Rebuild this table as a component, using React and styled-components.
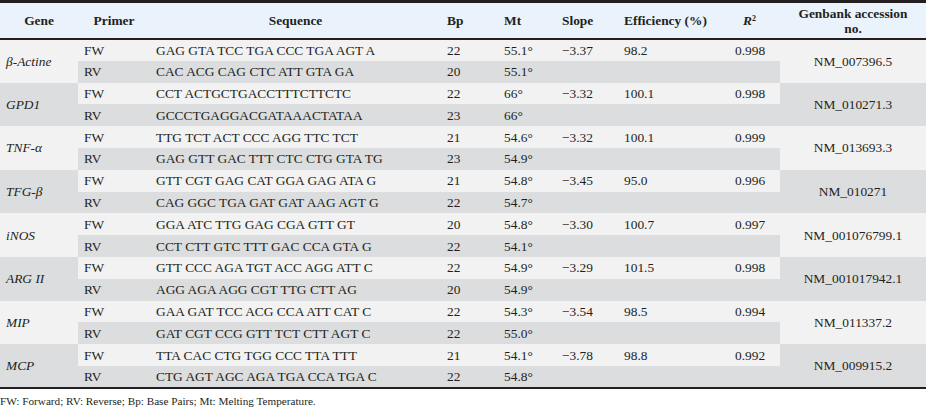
import React from 'react'
import styled, { createGlobalStyle } from 'styled-components'

const GlobalStyle = createGlobalStyle`
    html, body {
        margin: 0;
        padding: 0;
        background: #ffffff;
    }

    body {
        font-family: "Liberation Serif", "Times New Roman", Times, serif;
        color: #231f20;
    }
`

const SERIF = '"Liberation Serif", "Times New Roman", Times, serif'
const LIGHT = '#f2f2f2'
const DARK = '#dcdddf'

const Wrapper = styled.div`
    width: 926px;
    font-family: ${SERIF};
`

const Table = styled.table`
    width: 926px;
    border-collapse: collapse;
    border-spacing: 0;
    table-layout: fixed;
    border-top: 3px solid #231f20;
    border-bottom: 2px solid #231f20;
    font-family: ${SERIF};
    font-size: 13.4px;
    color: #231f20;
`

const HeadRow = styled.tr`
    background: #eaf3fb;
    border-bottom: 2px solid #231f20;
`

const HeadCell = styled.th`
    height: 37.5px;
    box-sizing: border-box;
    font-family: ${SERIF};
    font-weight: 700;
    text-align: ${p => p.$align || 'left'};
    padding: 0 ${p => p.$pad || 6}px;
    vertical-align: middle;
    line-height: 15px;

    i {
        font-style: italic;
    }

    sup {
        font-size: 8px;
        vertical-align: 4px;
        line-height: 0;
    }
`

const Cell = styled.td`
    height: 21.8px;
    box-sizing: border-box;
    background: ${p => (p.$dark ? DARK : LIGHT)};
    padding: 0 6px;
    font-family: ${SERIF};
    line-height: 15px;
    text-align: ${p => p.$align || 'left'};
    vertical-align: middle;
    white-space: nowrap;
    font-style: ${p => (p.$italic ? 'italic' : 'normal')};
`

const Note = styled.p`
    margin: 5px 0 0;
    font-family: ${SERIF};
    font-size: 11.2px;
    line-height: 14px;
`

const genes = [
    {
        name: 'β-Actine', acc: 'NM_007396.5', slope: '−3.37', eff: '98.2', r2: '0.998',
        fw: ['GAG GTA TCC TGA CCC TGA AGT A', '22', '55.1°'],
        rv: ['CAC ACG CAG CTC ATT GTA GA', '20', '55.1°'],
    },
    {
        name: 'GPD1', acc: 'NM_010271.3', slope: '−3.32', eff: '100.1', r2: '0.998',
        fw: ['CCT ACTGCTGACCTTTCTTCTC', '22', '66°'],
        rv: ['GCCCTGAGGACGATAAACTATAA', '23', '66°'],
    },
    {
        name: 'TNF-α', acc: 'NM_013693.3', slope: '−3.32', eff: '100.1', r2: '0.999',
        fw: ['TTG TCT ACT CCC AGG TTC TCT', '21', '54.6°'],
        rv: ['GAG GTT GAC TTT CTC CTG GTA TG', '23', '54.9°'],
    },
    {
        name: 'TFG-β', acc: 'NM_010271', slope: '−3.45', eff: '95.0', r2: '0.996',
        fw: ['GTT CGT GAG CAT GGA GAG ATA G', '21', '54.8°'],
        rv: ['CAG GGC TGA GAT GAT AAG AGT G', '22', '54.7°'],
    },
    {
        name: 'iNOS', acc: 'NM_001076799.1', slope: '−3.30', eff: '100.7', r2: '0.997',
        fw: ['GGA ATC TTG GAG CGA GTT GT', '20', '54.8°'],
        rv: ['CCT CTT GTC TTT GAC CCA GTA G', '22', '54.1°'],
    },
    {
        name: 'ARG II', acc: 'NM_001017942.1', slope: '−3.29', eff: '101.5', r2: '0.998',
        fw: ['GTT CCC AGA TGT ACC AGG ATT C', '22', '54.9°'],
        rv: ['AGG AGA AGG CGT TTG CTT AG', '20', '54.9°'],
    },
    {
        name: 'MIP', acc: 'NM_011337.2', slope: '−3.54', eff: '98.5', r2: '0.994',
        fw: ['GAA GAT TCC ACG CCA ATT CAT C', '22', '54.3°'],
        rv: ['GAT CGT CCG GTT TCT CTT AGT C', '22', '55.0°'],
    },
    {
        name: 'MCP', acc: 'NM_009915.2', slope: '−3.78', eff: '98.8', r2: '0.992',
        fw: ['TTA CAC CTG TGG CCC TTA TTT', '21', '54.1°'],
        rv: ['CTG AGT AGC AGA TGA CCA TGA C', '22', '54.8°'],
    },
]

const widths = [78, 72, 291, 57, 58, 62, 111, 51, 146]

export default function App() {
    return (
        <Wrapper>
            <GlobalStyle />
            <Table>
                <colgroup>
                    {widths.map((w, i) => <col key={i} style={{ width: w }} />)}
                </colgroup>
                <thead>
                    <HeadRow>
                        <HeadCell $align="center">Gene</HeadCell>
                        <HeadCell $align="center">Primer</HeadCell>
                        <HeadCell $align="center">Sequence</HeadCell>
                        <HeadCell>Bp</HeadCell>
                        <HeadCell>Mt</HeadCell>
                        <HeadCell>Slope</HeadCell>
                        <HeadCell>Efficiency (%)</HeadCell>
                        <HeadCell $pad={14}><i>R</i><sup>2</sup></HeadCell>
                        <HeadCell $align="center">Genbank accession<br />no.</HeadCell>
                    </HeadRow>
                </thead>
                <tbody>
                    {genes.map((g, i) => {
                        const geneDark = i % 2 === 1
                        return (
                            <React.Fragment key={g.name}>
                                <tr>
                                    <Cell rowSpan={2} $dark={geneDark} $italic>{g.name}</Cell>
                                    <Cell>FW</Cell>
                                    <Cell>{g.fw[0]}</Cell>
                                    <Cell>{g.fw[1]}</Cell>
                                    <Cell>{g.fw[2]}</Cell>
                                    <Cell>{g.slope}</Cell>
                                    <Cell>{g.eff}</Cell>
                                    <Cell>{g.r2}</Cell>
                                    <Cell rowSpan={2} $dark={geneDark} $align="center">{g.acc}</Cell>
                                </tr>
                                <tr>
                                    <Cell $dark>RV</Cell>
                                    <Cell $dark>{g.rv[0]}</Cell>
                                    <Cell $dark>{g.rv[1]}</Cell>
                                    <Cell $dark>{g.rv[2]}</Cell>
                                    <Cell $dark />
                                    <Cell $dark />
                                    <Cell $dark />
                                </tr>
                            </React.Fragment>
                        )
                    })}
                </tbody>
            </Table>
            <Note>FW: Forward; RV: Reverse; Bp: Base Pairs; Mt: Melting Temperature.</Note>
        </Wrapper>
    )
}
